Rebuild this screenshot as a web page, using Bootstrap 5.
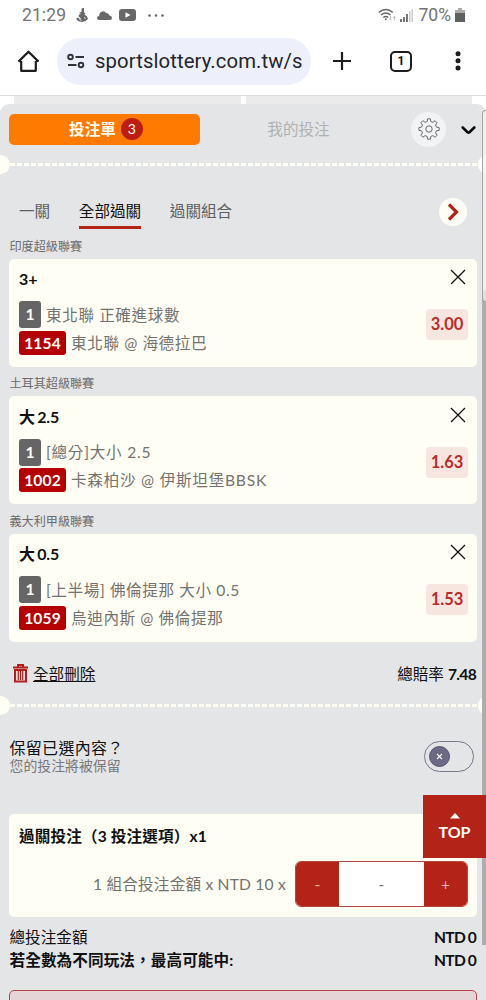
<!DOCTYPE html>
<html lang="zh-Hant">
<head>
<meta charset="utf-8">
<meta name="viewport" content="width=device-width, initial-scale=1">
<title>投注單</title>
<link href="https://cdn.jsdelivr.net/npm/bootstrap@5.3.0/dist/css/bootstrap.min.css" rel="stylesheet">
<style>
:root{--red:#b42318;--cream:#fffef5;--panel:#e4e5e7;--muted:#74736f}
html,body{height:1000px;overflow:hidden}
body{background:#fff;color:#111;font-family:Lato,"Noto Sans CJK TC",sans-serif;font-size:15.6px;line-height:24px}
svg{display:block;flex:none}
.statusbar{height:30px;font:17.5px/30px Roboto,sans-serif;color:#737373;padding:0 21px 0 22px}
.browser{height:66px;border-bottom:1px solid #dedede;padding:0 17px 3px 16px}
.address{width:254px;height:47px;border-radius:24px;background:#edf0fa;margin-left:16px;padding:0 8px;font:20.3px/50px Roboto,sans-serif;color:#24262c}
.address span{width:208px;white-space:nowrap;margin-left:10px}
.strips{height:8px;padding:0 14px;gap:5px}
.strips div{background:#ebebeb}
.sheet{height:896px;background:var(--panel);border-radius:9px 9px 0 0;overflow:hidden}
.toptabs{height:50px;padding:0 9px}
.btn-slip{width:191px;height:31px;padding:0 0 0 3px;border:0;border-radius:5px;background:#ff7a00;color:var(--cream);font-size:15.6px;font-weight:700;line-height:31px}
.count{width:22px;height:22px;line-height:22px;border-radius:50%;background:#bd1d13;font-size:14px;font-weight:400;margin-left:5px}
.mine{width:197px;color:#b0b1b3}
.gear{width:35px;height:35px;border-radius:50%;background:#f2f3f4}
.perf{height:20px;margin-right:-1px}
.perf i{width:10px;height:19px;background:var(--cream);flex:none}
.perf i:first-child{border-radius:0 10px 10px 0}
.perf i:last-child{border-radius:10px 0 0 10px;width:9px}
.perf div{height:3px;background:repeating-linear-gradient(90deg,var(--cream) 0 5px,transparent 5px 7px)}
.kinds{height:42.5px;margin-top:18px;padding:7px 0 0 19px;color:#5e5f61;gap:28.6px}
.kinds .on{color:#111;border-bottom:3.5px solid var(--red);height:30px}
.next{width:28px;height:28px;border-radius:50%;background:var(--cream);margin:-1px 19px 0 0}
.league{height:29.6px;font-size:12.1px;line-height:24px;color:#6a6b6d;padding:5.5px 0 0 9.5px}
.league:first-child{height:24.2px;padding-top:0}
.tile{margin:0 9px;background:var(--cream);border-radius:5px}
.pick{height:108px;padding:8.5px 9px 0 10px}
.pick h2{font-size:16px;font-weight:700;line-height:24px;margin:0;height:33.500px;letter-spacing:-.1px;word-spacing:-1.5px}
.line{color:var(--muted);height:28px;line-height:28px;letter-spacing:.6px}
.tag{display:block;color:var(--cream);font-weight:700;text-align:center;border-radius:3px;letter-spacing:.1px}
.tag-n{width:22px;height:27px;line-height:27px;background:#656565;margin-right:5px}
.tag-id{width:47px;height:24px;line-height:24px;background:#b40005;margin-right:5px}
.close-x{margin:2px 2px 0}
.odds{width:42px;height:31px;line-height:31px;border-radius:4px;background:#f7e5e0;color:#b92c2b;font-weight:700;font-size:16.5px;text-align:center;margin-top:24px}
.amount{font-weight:700;letter-spacing:-.7px;word-spacing:-.6px;padding-right:1px}
.switch{width:50px;height:31px;border:1px solid #77778c;border-radius:16px;padding-left:4px}
.knob{width:21px;height:21px;border-radius:50%;background:#6c6986;border:1px solid #55536d}
.step{width:173px;height:46px;border:1px solid #b9473f;border-radius:6px;background:#fff;overflow:hidden;text-align:center;line-height:44px}
.step button{width:43px;border:0;background:var(--red);color:#f1b9ac;padding:0}
.submit{height:40px;margin:0 9px;border:1px solid #b64347;border-radius:5px;background:#e6d5d7}
.top-btn{position:absolute;left:423px;top:795px;width:63px;height:63px;background:var(--red);color:var(--cream);font-weight:700;font-size:16px;line-height:21px;padding-top:18px}
.track{position:absolute;left:482px;top:290px;width:4px;height:655px;background:#adadad}
.thumb{position:absolute;left:481.5px;top:110px;width:4.5px;height:192px;border:1px solid #a4a4a6;border-right:0;border-radius:5px 0 0 5px;background:rgba(243,243,243,.75)}
</style>
</head>
<body class="position-relative">
<header>
<div class="statusbar d-flex align-items-center">
<span style="letter-spacing:.1px">21:29</span>
<svg style="margin-left:10px" width="12" height="14" viewBox="0 0 12 14" fill="#686868"><path d="M5.500 0.500L8 0v4.500l1.500.5L8.500 6.500 11 8.500l1 2.500-2.500 2L6 14l-3.500-.7L0 11l1.500-1.500L4 11l1-.8L2.500 8.500l.5-2L5 6 3 4.500 5.500 4z"/><path d="M3.500 11.500l2 .7M8 9.500l1.500.8" stroke="#fff" stroke-width=".9"/></svg>
<svg style="margin-left:9px" width="15" height="9" viewBox="0 0 15 9" fill="#686868"><path d="M2 9Q0 9 0 7 0 5 2.300 5 2 1 5.500.4 8-.2 9 2q2.800-.4 3.400 2.500Q15 4.800 15 7 15 9 13 9z"/></svg>
<svg style="margin-left:7px" width="17" height="13" viewBox="0 0 17 13"><rect width="17" height="12" rx="3" fill="#686868"/><path d="M6.500 3.300v5.400L11.500 6z" fill="#fff"/></svg>
<svg style="margin-left:12px" width="17" height="3" fill="#686868"><circle cx="1.500" cy="1.500" r="1.300"/><circle cx="8" cy="1.500" r="1.300"/><circle cx="14.500" cy="1.500" r="1.300"/></svg>
<svg class="ms-auto" width="19" height="14" viewBox="0 0 19 14" fill="none" stroke="#666" stroke-width="1.500"><path d="M.8 4.500q7-6 14 0M3 7q5-4 9.500 0M5.300 9.500q2.500-2 5 0"/><circle cx="7.800" cy="11.300" r="1" fill="#666" stroke="none"/><path d="M12.500 8v4m-1.300-1.500l1.300 1.500 1.300-1.500M16.500 12.500v-4m-1.300 1.500l1.300-1.500 1.300 1.500" stroke="#bbb" stroke-width=".9"/></svg>
<svg style="margin-left:3px" width="13" height="13" viewBox="0 0 13 13" fill="#777"><path d="M0 10h2v3H0zM3 8h2v5H3zM6 5h2v8H6z"/><path d="M9 2h1.500v11H9zM11.500 0H13v13h-1.500z" fill="#ccc"/></svg>
<span style="margin:0 4px 0 6px">70%</span>
<svg width="10" height="14" viewBox="0 0 10 14"><path d="M3 0h4v2h3v12H0V2h3z" fill="#aaa"/><path d="M0 5h10v9H0z" fill="#606060"/></svg>
</div>
<div class="browser d-flex align-items-center">
<svg width="25" height="24" viewBox="0 0 25 24" fill="none" stroke="#1d1d1f" stroke-width="2.200"><path d="M5.200 12v9.800h14.600V12M2.500 12.600L12.500 2.700l10 9.900M5 12H2.500M20 12h2.500" stroke-linejoin="round"/></svg>
<div class="address d-flex align-items-center">
<svg style="margin-left:2px" width="18" height="16" viewBox="0 0 18 16" fill="none" stroke="#303238" stroke-width="1.900"><circle cx="3.500" cy="4" r="2.300"/><path d="M8.500 4H17M1 12h8.500"/><circle cx="14" cy="12" r="2.300"/></svg>
<span style="letter-spacing:.1px">sportslottery.com.tw/s</span></div>
<svg style="margin-left:21px" width="20" height="20" viewBox="0 0 20 20" stroke="#1d1d1f" stroke-width="2.200"><path d="M10 1v18M1 10h18"/></svg>
<div class="d-flex align-items-center justify-content-center" style="width:22px;height:21px;border:2px solid #1d1d1f;border-radius:5px;margin-left:38px;font:bold 12px/17px Roboto,sans-serif">1</div>
<svg class="ms-auto" style="margin-right:8px" width="6" height="20" fill="#1d1d1f"><circle cx="3" cy="2.700" r="2.500"/><circle cx="3" cy="9.800" r="2.500"/><circle cx="3" cy="17" r="2.500"/></svg>
</div>
</header>
<div class="strips d-flex"><div class="flex-fill"></div><div class="flex-fill"></div></div>
<main class="sheet">
<div class="toptabs d-flex align-items-center">
<button class="btn-slip d-flex align-items-center justify-content-center">投注單<span class="count">3</span></button>
<div class="mine text-center">我的投注</div>
<div class="gear d-flex align-items-center justify-content-center ms-auto">
<svg width="22" height="22" viewBox="0 0 22 22" fill="none" stroke="#696969" stroke-width="1"><circle cx="11" cy="11" r="3.200"/><path d="M9.200 3.500L9.600.8h2.800l.4 2.700 2.100.9 2.200-1.700 2.100 2.100-1.700 2.200.9 2.100 2.800.5v2.800l-2.800.4-.9 2.100 1.700 2.300-2.100 2-2.200-1.600-2.100.9-.4 2.700H9.600l-.4-2.700-2.100-.9-2.300 1.600-2-2 1.700-2.300-.9-2.100-2.700-.4V9.600l2.700-.5.900-2.100-1.700-2.200 2-2.100 2.300 1.700z" stroke-linejoin="round"/></svg></div>
<svg style="margin:2px 1px 0 15px" width="15" height="9" viewBox="0 0 15 9" fill="none" stroke="#0c0c0c" stroke-width="2.600" stroke-linecap="round"><path d="M1.700 1.500L6.500 6.200q1 .8 2 0L13.300 1.500"/></svg>
</div>
<div class="perf d-flex align-items-center"><i></i><div class="flex-fill"></div><i></i></div>
<div class="kinds d-flex align-items-start"><span>一關</span><span class="on">全部過關</span><span>過關組合</span>
<div class="next ms-auto d-flex align-items-center justify-content-center"><svg width="12" height="18" viewBox="0 0 12 18" fill="none" stroke="#b42318" stroke-width="3.200"><path d="M2 1.500L9.500 9 2 16.500"/></svg></div></div>
<section>
<div class="league">印度超級聯賽</div>
<article class="tile pick d-flex justify-content-between"><div><h2>3+</h2><div class="line d-flex align-items-center"><b class="tag tag-n">1</b>東北聯 正確進球數</div><div class="line d-flex align-items-center"><b class="tag tag-id">1154</b>東北聯 @ 海德拉巴</div></div><div class="d-flex flex-column align-items-end"><svg class="close-x" width="16" height="16" viewBox="0 0 16 16" stroke="#111" stroke-width="1.300"><path d="M1 1l14 14M15 1L1 15"/></svg><div class="odds">3.00</div></div></article>
<div class="league">土耳其超級聯賽</div>
<article class="tile pick d-flex justify-content-between"><div><h2>大 2.5</h2><div class="line d-flex align-items-center"><b class="tag tag-n">1</b><span style="letter-spacing:.75px">[總分]大小 2.5</span></div><div class="line d-flex align-items-center"><b class="tag tag-id">1002</b><span style="letter-spacing:.75px">卡森柏沙 @ 伊斯坦堡BBSK</span></div></div><div class="d-flex flex-column align-items-end"><svg class="close-x" width="16" height="16" viewBox="0 0 16 16" stroke="#111" stroke-width="1.300"><path d="M1 1l14 14M15 1L1 15"/></svg><div class="odds">1.63</div></div></article>
<div class="league">義大利甲級聯賽</div>
<article class="tile pick d-flex justify-content-between"><div><h2>大 0.5</h2><div class="line d-flex align-items-center"><b class="tag tag-n">1</b>[上半場] 佛倫提那 大小 0.5</div><div class="line d-flex align-items-center"><b class="tag tag-id">1059</b>烏迪內斯 @ 佛倫提那</div></div><div class="d-flex flex-column align-items-end"><svg class="close-x" width="16" height="16" viewBox="0 0 16 16" stroke="#111" stroke-width="1.300"><path d="M1 1l14 14M15 1L1 15"/></svg><div class="odds">1.53</div></div></article>
</section>
<div class="d-flex align-items-center" style="height:53.900px;padding:9.500px 9px 0 13px">
<svg width="15" height="19" viewBox="0 0 15 19" fill="none" stroke="#b71c1c"><path d="M0 3.500h15M5 3V1h5v2" stroke-width="2"/><path d="M2 6h11v11.500H2z" stroke-width="2"/><path d="M5.300 7v9M7.500 7v9M9.700 7v9" stroke-width="1.200"/></svg>
<span class="text-decoration-underline" style="margin-left:5px">全部刪除</span><span class="ms-auto">總賠率 <span class="amount">7.48</span></span></div>
<div class="perf d-flex align-items-center"><i></i><div class="flex-fill"></div><i></i></div>
<div class="d-flex justify-content-between" style="height:98px;padding:21px 12px 0 9.500px"><div><div style="font-size:16px;letter-spacing:.3px;line-height:21.500px">保留已選內容？</div><div style="font-size:13.900px;line-height:15px;color:#77787a">您的投注將被保留</div></div>
<div class="switch d-flex align-items-center mt-1"><div class="knob d-flex align-items-center justify-content-center"><svg width="7" height="7" stroke="#fff" stroke-width="1.100"><path d="M1 1l5 5M6 1L1 6"/></svg></div></div></div>
<section class="tile" style="height:103px;padding:10.500px 9px 0 10px">
<div class="fw-bold" style="letter-spacing:.15px">過關投注（3 投注選項）x1</div>
<div class="d-flex align-items-center justify-content-end" style="margin-top:13px;color:#74736f"><span style="margin-right:9px;letter-spacing:.2px">1 組合投注金額 x NTD 10 x</span><div class="step d-flex"><button>-</button><span class="flex-fill">-</span><button>+</button></div></div>
</section>
<div style="padding:9px 9px 0 9.500px;line-height:23px;height:73px"><div class="d-flex justify-content-between"><span>總投注金額</span><span class="amount">NTD 0</span></div><div class="d-flex justify-content-between fw-bold"><span style="letter-spacing:.1px">若全數為不同玩法，最高可能中:</span><span class="amount">NTD 0</span></div></div>
<div class="submit"></div>
</main>
<div class="track"></div><div class="thumb"></div>
<div class="top-btn d-flex flex-column align-items-center"><svg width="10" height="6" fill="#fffef5"><path d="M0 5.500L5 0l5 5.500z"/></svg><span style="margin-top:2px">TOP</span></div>
<script src="https://cdn.jsdelivr.net/npm/bootstrap@5.3.0/dist/js/bootstrap.bundle.min.js"></script>
</body>
</html>
